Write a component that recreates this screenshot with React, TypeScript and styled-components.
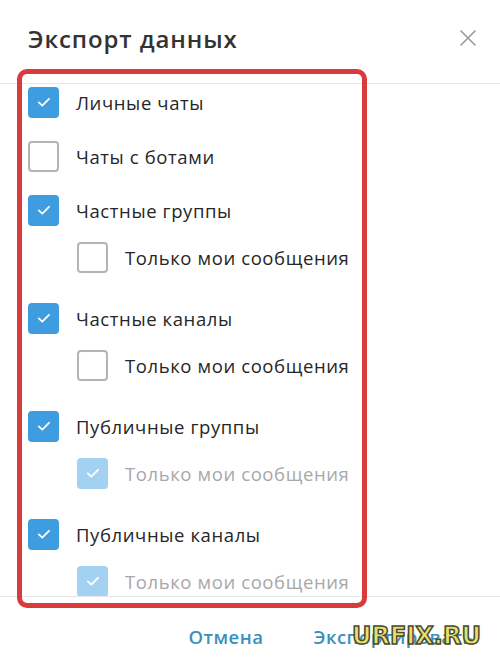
import * as React from 'react';
import styled, { createGlobalStyle } from 'styled-components';

const GlobalStyle = createGlobalStyle`
  html, body {
    margin: 0;
    padding: 0;
    background: #ffffff;
  }
  body {
    font-family: 'Open Sans', 'Noto Sans', sans-serif;
  }
`;

const Dialog = styled.div`
  position: relative;
  width: 500px;
  height: 670px;
  background: #ffffff;
  display: flex;
  flex-direction: column;
  overflow: hidden;
`;

const Header = styled.div`
  height: 84px;
  display: flex;
  align-items: center;
  justify-content: space-between;
  padding: 0 20px 0 28px;
  box-sizing: border-box;
  border-bottom: 1px solid #e6e6e6;
`;

const Title = styled.div`
  font-size: 24px;
  font-weight: 600;
  letter-spacing: 0.9px;
  color: #333333;
  margin-top: -6px;
`;

const CloseButton = styled.div`
  width: 24px;
  height: 24px;
  margin-top: -8px;
  display: flex;
  align-items: center;
  justify-content: center;
`;

const List = styled.div`
  height: 513px;
  overflow: hidden;
  padding: 0 0 0 28px;
  box-sizing: border-box;
  border-bottom: 1px solid #e6e6e6;
`;

const Row = styled.div<{ $sub?: boolean; $gap: number }>`
  height: 36px;
  display: flex;
  align-items: center;
  gap: 17px;
  padding-left: ${p => (p.$sub ? '49px' : '0')};
  margin-bottom: ${p => p.$gap}px;
`;

const Box = styled.div<{ $checked: boolean; $disabled?: boolean }>`
  width: 31px;
  height: 31px;
  box-sizing: border-box;
  border-radius: 4px;
  flex-shrink: 0;
  display: flex;
  align-items: center;
  justify-content: center;
  background: ${p => (p.$checked ? (p.$disabled ? '#a3d1f2' : '#3d9de0') : '#ffffff')};
  border: ${p => (p.$checked ? 'none' : '2px solid #b4b4b4')};
`;

const Label = styled.span<{ $disabled?: boolean }>`
  font-size: 18.5px;
  letter-spacing: 0.6px;
  color: ${p => (p.$disabled ? '#a8a8a8' : '#262626')};
  white-space: nowrap;
`;

const Footer = styled.div`
  flex: 1;
  display: flex;
  align-items: center;
  justify-content: flex-end;
  gap: 50px;
  padding: 5px 26px 0 0;
`;

const FooterButton = styled.span`
  font-size: 18.5px;
  font-weight: 600;
  letter-spacing: 0.5px;
  color: #3b8fbd;
`;

const Highlight = styled.div`
  position: absolute;
  left: 17px;
  top: 69px;
  width: 350px;
  height: 539px;
  box-sizing: border-box;
  border: 5px solid #d93a3b;
  border-radius: 10px;
  pointer-events: none;
`;

const Watermark = styled.div`
  position: absolute;
  left: 352px;
  top: 622px;
  font-family: 'DejaVu Sans', sans-serif;
  font-weight: 900;
  font-size: 24px;
  color: #e6e070;
  -webkit-text-stroke: 1.5px #4a4a2a;
`;

const Check = () => (
  <svg width="18" height="18" viewBox="0 0 18 18">
    <path d="M3.8 9.4 L7.3 12.6 L14 5.8" fill="none" stroke="#ffffff" strokeWidth="1.8" strokeLinecap="round" strokeLinejoin="round" />
  </svg>
);

type Item = { label: string; checked: boolean; sub?: { checked: boolean; disabled?: boolean } };

const items: Item[] = [
  { label: 'Личные чаты', checked: true },
  { label: 'Чаты с ботами', checked: false },
  { label: 'Частные группы', checked: true, sub: { checked: false } },
  { label: 'Частные каналы', checked: true, sub: { checked: false } },
  { label: 'Публичные группы', checked: true, sub: { checked: true, disabled: true } },
  { label: 'Публичные каналы', checked: true, sub: { checked: true, disabled: true } },
];

const Option = (props: { label: string; checked: boolean; disabled?: boolean; sub?: boolean; gap: number }) => (
  <Row $sub={props.sub} $gap={props.gap}>
    <Box $checked={props.checked} $disabled={props.disabled}>
      {props.checked && <Check />}
    </Box>
    <Label $disabled={props.disabled}>{props.label}</Label>
  </Row>
);

export default function App() {
  return (
    <>
      <GlobalStyle />
      <Dialog>
        <Header>
          <Title>Экспорт данных</Title>
          <CloseButton>
            <svg width="18" height="18" viewBox="0 0 18 18">
              <path d="M2 2 L16 16 M16 2 L2 16" stroke="#9a9a9a" strokeWidth="1.6" strokeLinecap="round" />
            </svg>
          </CloseButton>
        </Header>
        <List>
          {items.map(it => (
            <React.Fragment key={it.label}>
              <Option label={it.label} checked={it.checked} gap={it.sub ? 11 : 18} />
              {it.sub && (
                <Option
                  label="Только мои сообщения"
                  checked={it.sub.checked}
                  disabled={it.sub.disabled}
                  sub
                  gap={25}
                />
              )}
            </React.Fragment>
          ))}
        </List>
        <Footer>
          <FooterButton>Отмена</FooterButton>
          <FooterButton>Экспортировать</FooterButton>
        </Footer>
        <Highlight />
        <Watermark>URFIX.RU</Watermark>
      </Dialog>
    </>
  );
}
